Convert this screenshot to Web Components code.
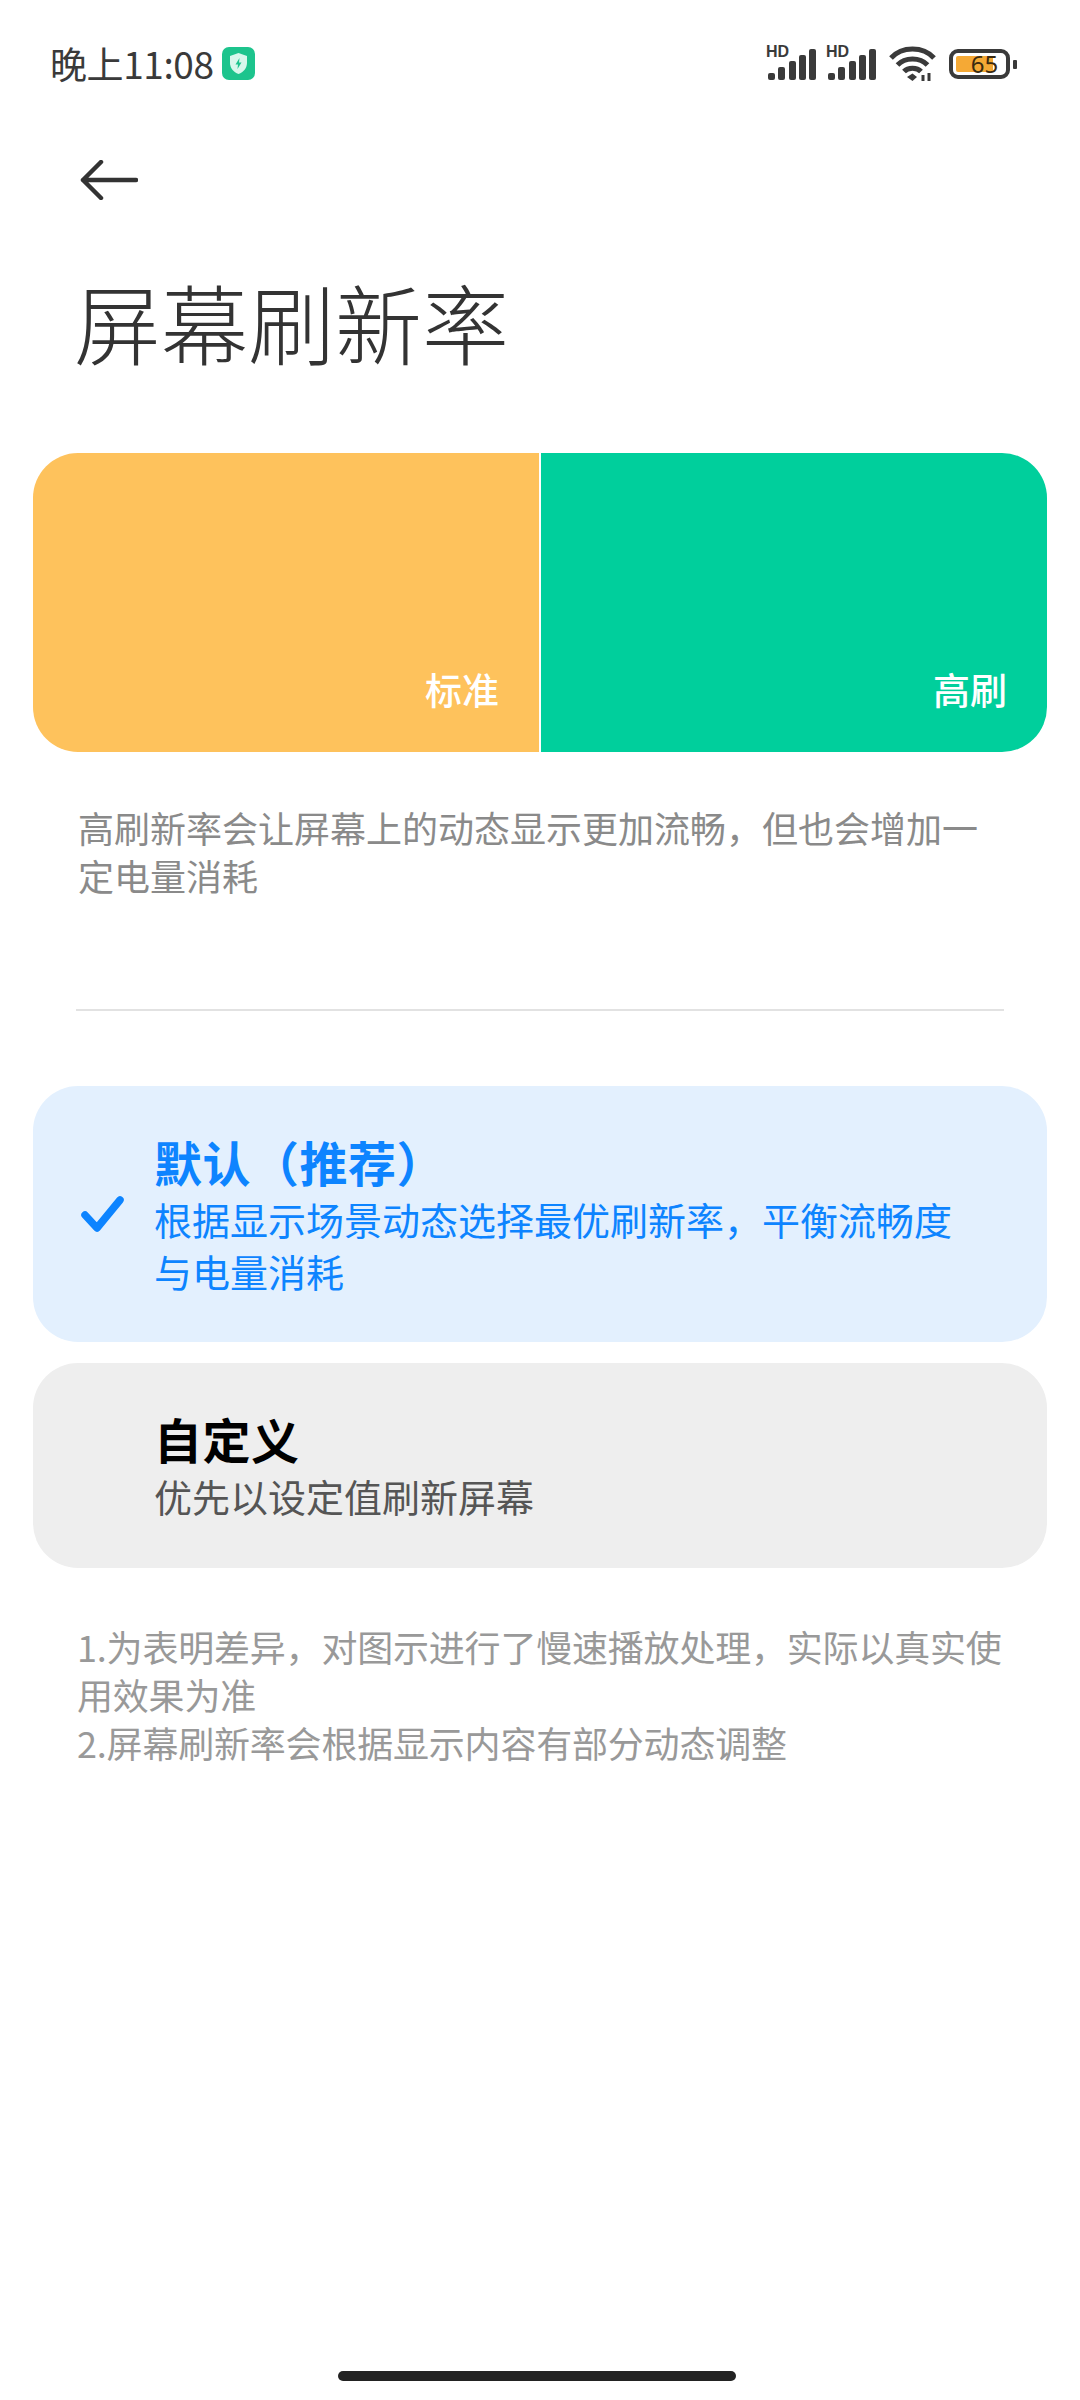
<!DOCTYPE html>
<html lang="zh">
<head>
<meta charset="utf-8">
<title>屏幕刷新率</title>
<style>
    html, body { margin: 0; padding: 0; background: #fff; }
    body { font-family: "Noto Sans CJK SC", "Noto Sans", sans-serif; }
</style>
</head>
<body>

<template id="status-bar-template">
    <style>
        :host { display: flex; align-items: center; height: 128px; padding: 0 63px 0 50px; box-sizing: border-box; color: #3a3a3a; }
        .time { font-size: 37px; line-height: 44px; letter-spacing: -0.4px; margin-top: -2px; }
        .shield { margin-left: 8px; display: block; margin-top: -2px; }
        .icons { margin-left: auto; display: flex; align-items: center; }
        .signal { position: relative; width: 52px; height: 34px; margin-right: 8px; display: block; }
        .signal svg { display: block; }
        .hd { position: absolute; left: 1px; top: -3px; font: 700 16px/16px "Liberation Sans", sans-serif; }
        .wifi { display: block; margin: 0 13px 0 4px; }
        .battery { position: relative; width: 61px; height: 30px; border: 4px solid #3a3a3a; border-radius: 9px; box-sizing: border-box; }
        .level { position: absolute; left: 3px; top: 3px; bottom: 3px; width: 37px; background: #f5a935; border-radius: 2px; }
        .pct { position: absolute; left: 10px; right: 0; top: 0; text-align: center; font: 400 24px/22px "Noto Sans", sans-serif; color: #3b2a10; }
        .tip { width: 4px; height: 9px; margin-left: 3px; background: #3a3a3a; border-radius: 1px; }
    </style>
    <span class="time"><slot></slot></span>
    <svg class="shield" width="33" height="33" viewBox="0 0 33 33">
        <rect width="33" height="33" rx="7" fill="#1dc48d"/>
        <path d="M16.500 6 L25 9 V16 C25 21 21.500 25 16.500 27 C11.500 25 8 21 8 16 V9 Z" fill="#d8f7ec"/>
        <path d="M17.500 11 L13.500 17.500 H16 L15.500 22 L19.500 15.500 H17 Z" fill="#1dc48d"/>
    </svg>
    <div class="icons">
        <div class="signal"><span class="hd">HD</span><svg width="52" height="34" viewBox="0 0 52 34" fill="#3a3a3a">
            <rect x="3" y="26" width="7" height="7" rx="2"/>
            <rect x="13" y="20" width="7" height="13" rx="2"/>
            <rect x="24" y="14" width="7" height="19" rx="2"/>
            <rect x="34" y="8" width="7" height="25" rx="2"/>
            <rect x="44" y="2" width="7" height="31" rx="2"/>
        </svg></div>
        <div class="signal"><span class="hd">HD</span><svg width="52" height="34" viewBox="0 0 52 34" fill="#3a3a3a">
            <rect x="3" y="26" width="7" height="7" rx="2"/>
            <rect x="13" y="20" width="7" height="13" rx="2"/>
            <rect x="24" y="14" width="7" height="19" rx="2"/>
            <rect x="34" y="8" width="7" height="25" rx="2"/>
            <rect x="44" y="2" width="7" height="31" rx="2"/>
        </svg></div>
        <svg class="wifi" width="47" height="36" viewBox="0 0 47 36" fill="none" stroke="#3a3a3a" stroke-width="5">
            <path d="M2 12 C13 0 34 0 45 12"/>
            <path d="M8.500 19 C16 11 31 11 38.500 19"/>
            <path d="M15 25.500 C19 21 28 21 32 25.500"/>
            <path d="M18 31 L23.500 27.500 L28 31 L23.500 35 Z" fill="#3a3a3a" stroke="none"/>
            <path d="M34 29 V35 M40 27 V35" stroke-width="3"/>
        </svg>
        <div class="battery"><div class="level"></div><div class="pct">65</div></div>
        <div class="tip"></div>
    </div>
</template>

<template id="back-arrow-template">
    <style>
        :host { display: block; padding: 32px 0 0 80px; }
        svg { display: block; }
    </style>
    <svg width="58" height="40" viewBox="0 0 58 40" fill="none" stroke="#333" stroke-width="4.500" stroke-linecap="round" stroke-linejoin="round">
        <path d="M56 20 H3 M21 2 L3 20 L21 38"/>
    </svg>
</template>

<template id="page-title-template">
    <style>
        :host { display: block; margin-top: 71px; padding-left: 74px; font-size: 87px; line-height: 100px; font-weight: 300; color: #333; }
    </style>
    <slot></slot>
</template>

<template id="refresh-preview-template">
    <style>
        :host { display: flex; margin: 82px 33px 0; height: 299px; border-radius: 45px; overflow: hidden; }
        ::slotted(preview-pane) { flex: 1; }
        .gap { width: 2px; background: #fff; }
    </style>
    <slot name="left"></slot>
    <div class="gap"></div>
    <slot name="right"></slot>
</template>

<template id="preview-pane-template">
    <style>
        :host { display: flex; align-items: flex-end; justify-content: flex-end; padding: 0 40px 41px 0; background: var(--pane-color); color: #fff; font-size: 37px; line-height: 44px; font-weight: 500; }
    </style>
    <slot></slot>
</template>

<template id="hint-text-template">
    <style>
        :host { display: block; padding: 0 var(--hint-right, 76px) 0 var(--hint-left, 78px); font-size: 36px; line-height: 48px; color: var(--hint-color, #8a8a8a); letter-spacing: var(--hint-spacing, 0); }
    </style>
    <slot></slot>
</template>

<template id="h-divider-template">
    <style>
        :host { display: block; height: 2px; margin: 110px 76px 0; background: #e2e2e2; }
    </style>
</template>

<template id="option-card-template">
    <style>
        :host { display: flex; align-items: center; margin: 0 33px; padding: 45px 60px 45px 48px; border-radius: 45px; background: #eeeeee; color: #000; }
        :host([selected]) { background: #e3f0fe; color: #0d84ff; }
        .check { flex: none; width: 43px; height: 38px; margin-right: 30px; visibility: hidden; }
        :host([selected]) .check { visibility: visible; }
        .title { font-size: 48px; line-height: 60px; font-weight: 700; letter-spacing: 0.5px; }
        .sub { margin-top: 2px; font-size: 38px; line-height: 52px; color: #555; }
        :host([selected]) .sub { color: #0d84ff; }
    </style>
    <svg class="check" viewBox="0 0 43 38" fill="none" stroke="#0d84ff" stroke-width="7.500" stroke-linecap="round" stroke-linejoin="round">
        <path d="M4 20 L16 33 L39 5"/>
    </svg>
    <div>
        <div class="title"><slot name="title"></slot></div>
        <div class="sub"><slot name="sub"></slot></div>
    </div>
</template>

<template id="home-indicator-template">
    <style>
        :host { display: block; margin-top: auto; padding: 0 344px 19px 338px; }
        div { height: 10px; border-radius: 5px; background: #222; }
    </style>
    <div></div>
</template>

<template id="app-page-template">
    <style>
        :host { display: flex; flex-direction: column; width: 1080px; height: 2400px; overflow: hidden; background: #fff; }
    </style>
    <slot></slot>
</template>

<app-page>
    <status-bar>晚上11:08</status-bar>
    <back-arrow></back-arrow>
    <page-title>屏幕刷新率</page-title>
    <refresh-preview>
        <preview-pane slot="left" style="--pane-color:#fec25c">标准</preview-pane>
        <preview-pane slot="right" style="--pane-color:#00cf9c">高刷</preview-pane>
    </refresh-preview>
    <hint-text style="margin-top:51px">高刷新率会让屏幕上的动态显示更加流畅，但也会增加一定电量消耗</hint-text>
    <h-divider></h-divider>
    <option-card selected style="margin-top:75px">
        <span slot="title">默认（推荐）</span>
        <span slot="sub">根据显示场景动态选择最优刷新率，平衡流畅度与电量消耗</span>
    </option-card>
    <option-card style="margin-top:21px;padding-bottom:46px">
        <span slot="title">自定义</span>
        <span slot="sub">优先以设定值刷新屏幕</span>
    </option-card>
    <hint-text style="margin-top:54px;--hint-color:#999;--hint-left:77px;--hint-right:66px;--hint-spacing:-0.2px">1.为表明差异，对图示进行了慢速播放处理，实际以真实使用效果为准<br>2.屏幕刷新率会根据显示内容有部分动态调整</hint-text>
    <home-indicator></home-indicator>
</app-page>

<script>
    // every element just clones its template into an open shadow root
    function defineFromTemplate(name) {
        const template = document.getElementById(name + '-template');
        customElements.define(name, class extends HTMLElement {
            constructor() {
                super();
                this.attachShadow({ mode: 'open' }).appendChild(template.content.cloneNode(true));
            }
        });
    }

    ['status-bar', 'back-arrow', 'page-title', 'refresh-preview', 'preview-pane', 'hint-text',
     'h-divider', 'option-card', 'home-indicator', 'app-page'].forEach(defineFromTemplate);
</script>
</body>
</html>
